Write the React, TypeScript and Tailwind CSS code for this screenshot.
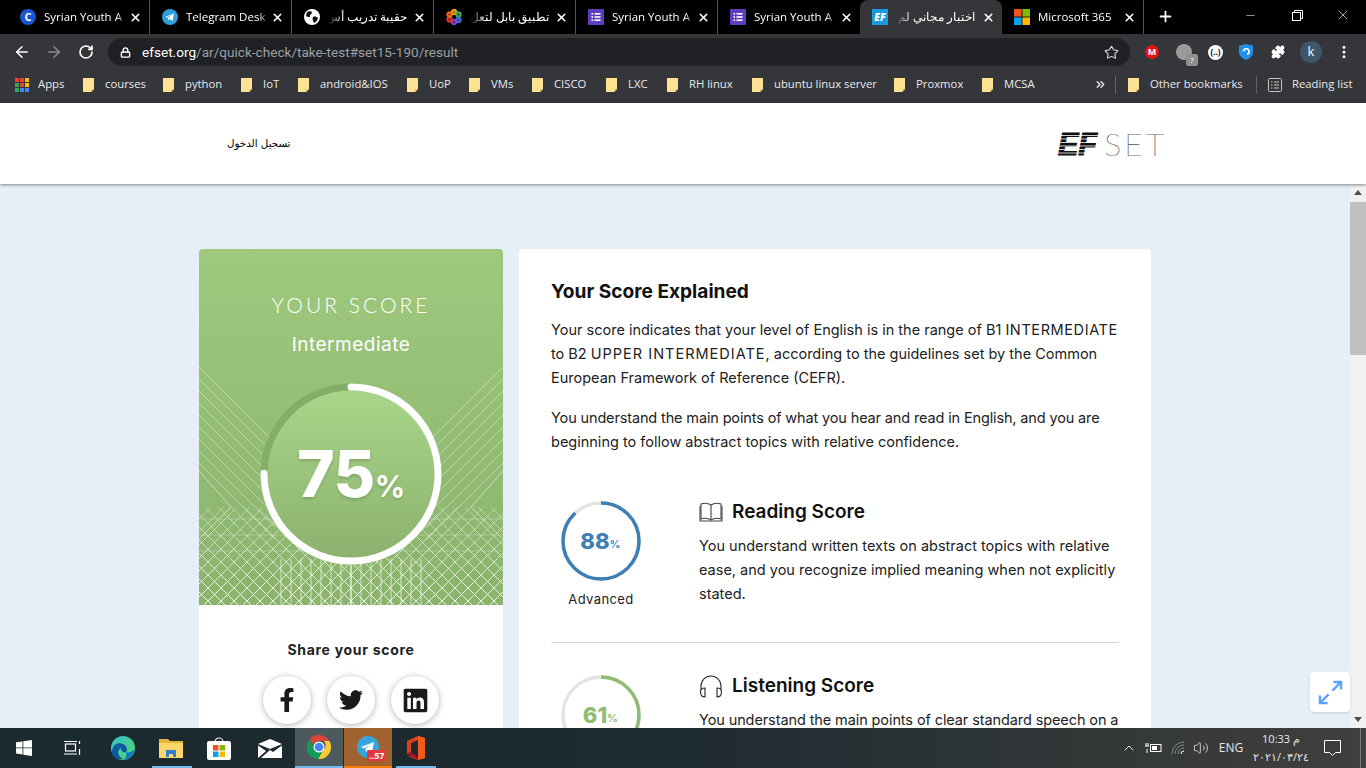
import { ArrowLeft, ArrowRight, RotateCw, Star, Lock, Plus, X, Minus, ChevronUp, MoreVertical, Puzzle, ChevronsRight, Volume2 } from "lucide-react";
import { FaFacebookF, FaTwitter, FaLinkedin } from "react-icons/fa";

const ui = "font-['Open_Sans','Noto_Sans',sans-serif]";
const page = "font-['Inter','Noto_Sans',sans-serif]";

function Favicon({ kind }: { kind: string }) {
  if (kind === "c")
    return (
      <span className="flex h-4 w-4 shrink-0 items-center justify-center rounded-full bg-[#1a56d6] text-[11px] font-bold text-white">C</span>
    );
  if (kind === "tg")
    return (
      <svg className="shrink-0" width="16" height="16" viewBox="0 0 16 16">
        <circle cx="8" cy="8" r="8" fill="#2f9fd8" />
        <path d="M3 8l9-3.6-1.5 7.6-2.7-2-1.4 1.4-.3-2.4 4.2-3.4-5.2 3z" fill="#fff" />
      </svg>
    );
  if (kind === "globe")
    return (
      <svg className="shrink-0" width="16" height="16" viewBox="0 0 16 16">
        <circle cx="8" cy="8" r="8" fill="#fff" />
        <path d="M3 3c2-1 4-1 5 0 0 2-2 2-2 4s-2 1-4 0zM9 8c2-1 4 0 5 1-1 3-2 4-4 5-1-2-2-4-1-6z" fill="#111" />
      </svg>
    );
  if (kind === "babel")
    return (
      <svg className="shrink-0" width="16" height="16" viewBox="0 0 16 16">
        <g fill="#111" strokeWidth="2.4">
          <circle cx="8" cy="3" r="2" stroke="#e8a317" />
          <circle cx="12.5" cy="5.5" r="2" stroke="#3aa655" />
          <circle cx="12.5" cy="11" r="2" stroke="#2b6fd1" />
          <circle cx="8" cy="13" r="2" stroke="#8d3bc9" />
          <circle cx="3.5" cy="10.500" r="2" stroke="#d8342b" />
          <circle cx="3.5" cy="5.500" r="2" stroke="#e86a17" />
        </g>
      </svg>
    );
  if (kind === "forms")
    return (
      <svg className="shrink-0" width="16" height="16" viewBox="0 0 16 16">
        <rect width="16" height="16" rx="1" fill="#5d3fbd" />
        <g fill="#fff">
          <rect x="3.5" y="4" width="1.6" height="1.6" />
          <rect x="6.5" y="4" width="6" height="1.6" />
          <rect x="3.5" y="7.2" width="1.6" height="1.6" />
          <rect x="6.5" y="7.2" width="6" height="1.6" />
          <rect x="3.5" y="10.4" width="1.6" height="1.6" />
          <rect x="6.5" y="10.4" width="6" height="1.6" />
        </g>
      </svg>
    );
  if (kind === "ef")
    return (
      <span className="flex h-4 w-4 shrink-0 items-center justify-center bg-[#1b9be0] text-[10px] font-black italic leading-none text-white">EF</span>
    );
  return (
    <svg className="shrink-0" width="16" height="16" viewBox="0 0 16 16">
      <rect width="7.6" height="7.6" fill="#f25022" />
      <rect x="8.4" width="7.6" height="7.6" fill="#7fba00" />
      <rect y="8.4" width="7.6" height="7.6" fill="#00a4ef" />
      <rect x="8.4" y="8.4" width="7.6" height="7.6" fill="#ffb900" />
    </svg>
  );
}

const tabs = [
  { icon: "c", title: "Syrian Youth A" },
  { icon: "tg", title: "Telegram Desk" },
  { icon: "globe", title: "حقيبة تدريب أس", rtl: true },
  { icon: "babel", title: "تطبيق بابل لتعل", rtl: true },
  { icon: "forms", title: "Syrian Youth A" },
  { icon: "forms", title: "Syrian Youth A" },
  { icon: "ef", title: "اختبار مجاني لم", rtl: true, active: true },
  { icon: "ms", title: "Microsoft 365" },
];

function TabStrip() {
  return (
    <div className={`flex h-[34px] shrink-0 items-end bg-black pl-2 ${ui}`}>
      {tabs.map((t, i) => (
        <div
          key={i}
          className={`flex h-[34px] w-[142px] items-center pl-[12px] pr-[7px] ${
            t.active ? "rounded-t-lg bg-[#35363a]" : tabs[i + 1]?.active ? "" : "border-r border-[#55565a]"
          }`}
        >
          <Favicon kind={t.icon} />
          {t.rtl ? (
            <span dir="rtl" className="ml-2 w-[79px] overflow-hidden whitespace-nowrap text-[11.5px] text-white [mask-image:linear-gradient(to_left,#000_80%,transparent)]">
              {t.title}
            </span>
          ) : (
            <span className="ml-2 w-[84px] overflow-hidden whitespace-nowrap text-[11.5px] text-white [mask-image:linear-gradient(to_right,#000_86%,transparent)]">
              {t.title}
            </span>
          )}
          <X className="ml-auto shrink-0 text-white" size={13} strokeWidth={3} />
        </div>
      ))}
      <Plus className="ml-[13px] mb-[9px] text-white" size={17} strokeWidth={2.5} />
      <div className="ml-auto flex h-[34px] items-start text-white">
        <div className="flex h-[30px] w-[47px] items-center justify-center"><Minus size={13} strokeWidth={1} /></div>
        <div className="flex h-[30px] w-[46px] items-center justify-center">
          <svg width="11" height="11" viewBox="0 0 11 11" fill="none" stroke="#fff" strokeWidth="1">
            <rect x="0.5" y="2.5" width="8" height="8" />
            <path d="M2.5 2.5v-2h8v8h-2" />
          </svg>
        </div>
        <div className="flex h-[30px] w-[46px] items-center justify-center"><X size={16} strokeWidth={1} /></div>
      </div>
    </div>
  );
}

function Toolbar() {
  return (
    <div className={`flex h-[36px] shrink-0 items-center bg-[#35363a] ${ui}`}>
      <ArrowLeft className="ml-[13px] text-white" size={18} strokeWidth={2} />
      <ArrowRight className="ml-[14px] text-[#8b8c8e]" size={18} strokeWidth={2} />
      <RotateCw className="ml-[15px] text-white" size={16} strokeWidth={2.5} />
      <div className="ml-[14px] flex h-[28px] w-[1022px] items-center rounded-full bg-[#202124] pl-[12px] pr-[11px]">
        <Lock className="text-white" size={11} strokeWidth={3} />
        <span className="ml-[11px] font-['Roboto',sans-serif] text-[13.6px] text-[#9aa0a6]">
          <span className="text-white">efset.org</span>/ar/quick-check/take-test#set15-190/result
        </span>
        <Star className="ml-auto text-[#dfe1e5]" size={15} strokeWidth={1.7} />
      </div>
      <span className="ml-[15px] flex h-[14px] w-[14px] items-center justify-center rounded-full bg-[#e2131b] text-[9px] font-bold text-white">M</span>
      <span className="relative ml-[17px] h-[16px] w-[16px] rounded-full bg-[#9b9b9b]">
        <span className="absolute left-[10px] top-[10px] flex h-[12px] w-[12px] items-center justify-center rounded-[2px] bg-[#8f8f8f] text-[8px] text-white">?</span>
      </span>
      <span className="ml-[16px] flex h-[15px] w-[15px] items-center justify-center rounded-full bg-white text-[8px] font-bold text-black">(..)</span>
      <svg className="ml-[16px]" width="14" height="16" viewBox="0 0 14 16">
        <path d="M0 1.5 7 0l7 1.5V8c0 4-3.5 6.8-7 8-3.500-1.200-7-4-7-8z" fill="#1f8fe8" />
        <path d="M4.500 7.500a2.800 2.800 0 1 1 3.500 2.700" fill="none" stroke="#fff" strokeWidth="1.600" />
      </svg>
      <Puzzle className="ml-[18px] fill-white text-white" size={14} strokeWidth={2} />
      <span className="ml-[15px] flex h-[22px] w-[22px] items-center justify-center rounded-full bg-[#3e5667] text-[13px] text-white">k</span>
      <MoreVertical className="ml-[14px] text-white" size={16} strokeWidth={2.5} />
    </div>
  );
}

function Folder() {
  return (
    <svg width="11" height="14" viewBox="0 0 11 14" className="shrink-0">
      <path d="M0 0h11v11l-3 3H0z" fill="#fde293" />
      <path d="M11 11H8v3z" fill="#e8c468" />
    </svg>
  );
}

const bookmarks = [
  { label: "courses", width: "w-[40px]" },
  { label: "python", width: "w-[38px]" },
  { label: "IoT", width: "w-[17px]" },
  { label: "android&IOS", width: "w-[69px]" },
  { label: "UoP", width: "w-[22px]" },
  { label: "VMs", width: "w-[23px]" },
  { label: "CISCO", width: "w-[34px]" },
  { label: "LXC", width: "w-[21px]" },
  { label: "RH linux", width: "w-[45px]" },
  { label: "ubuntu linux server", width: "w-[102px]" },
  { label: "Proxmox", width: "w-[48px]" },
  { label: "MCSA", width: "w-[33px]" },
];

function BookmarksBar() {
  return (
    <div className={`flex h-[33px] shrink-0 items-center bg-[#35363a] pb-[4px] pl-[15px] text-[11.3px] text-[#e8eaed] ${ui}`}>
      <div className="grid h-[14px] w-[14px] grid-cols-3 gap-[1px]">
        {["#ea4335", "#ea4335", "#fbbc04", "#34a853", "#ea4335", "#fbbc04", "#34a853", "#4285f4", "#4285f4"].map((c, i) => (
          <span key={i} style={{ background: c }} />
        ))}
      </div>
      <span className="ml-[9px] w-[27px] whitespace-nowrap">Apps</span>
      {bookmarks.map((b) => (
        <div key={b.label} className="ml-[18px] flex items-center">
          <Folder />
          <span className={`ml-[11px] whitespace-nowrap ${b.width}`}>{b.label}</span>
        </div>
      ))}
      <ChevronsRight className="ml-[57px] text-[#e8eaed]" size={13} strokeWidth={2.5} />
      <span className="ml-[8px] h-[18px] w-px bg-[#5f6368]" />
      <span className="ml-[12px]"><Folder /></span>
      <span className="ml-[11px] w-[92px] whitespace-nowrap">Other bookmarks</span>
      <span className="ml-[14px] h-[18px] w-px bg-[#5f6368]" />
      <svg className="ml-[11px]" width="14" height="14" viewBox="0 0 14 14" fill="none" stroke="#c4c7c5">
        <rect x="0.5" y="0.5" width="13" height="13" rx="1" />
        <path d="M3 4h1.500M6 4h5M3 7h1.500M6 7h5M3 10h1.500M6 10h5" />
      </svg>
      <span className="ml-[10px] whitespace-nowrap">Reading list</span>
    </div>
  );
}

function EfLogo() {
  return (
    <div className="flex items-center">
      <svg width="41" height="26" viewBox="0 0 41 26" className="overflow-visible">
        <text x="0" y="24" fontFamily="Liberation Sans" fontSize="31" fontWeight="900" fontStyle="italic" fill="#111" stroke="#111" strokeWidth="1.2" textLength="39" lengthAdjust="spacingAndGlyphs">EF</text>
        <g stroke="#fff" strokeWidth="0.800">
          <path d="M0 4.500h42M0 8h42M0 11.500h42M0 15h42M0 18.500h42M0 22h42" />
        </g>
      </svg>
      <span className="ml-[5px] font-['Lato',sans-serif] text-[32px] font-thin leading-none tracking-[3px] text-[#222] [-webkit-text-stroke:0.2px_#666]">SET</span>
    </div>
  );
}

// the line work behind the big score circle
function ScorePattern() {
  const upper: string[] = [];
  for (let i = 0; i < 9; i++) {
    const y = 118 + i * 12;
    upper.push(`M0 ${y}L76 ${y + 76}`);
    upper.push(`M304 ${y}L228 ${y + 76}`);
  }
  const lattice: string[] = [];
  for (let k = -98; k < 304; k += 13) {
    lattice.push(`M${k} 258L${k + 98} 356`);
    lattice.push(`M${304 - k} 258L${304 - k - 98} 356`);
  }
  const verticals: string[] = [];
  for (let d = 0; d <= 70; d += 10) {
    verticals.push(`M${152 - d} 310V356`);
    verticals.push(`M${152 + d} 310V356`);
  }
  return (
    <svg className="absolute bottom-0 left-0" width="304" height="356" viewBox="0 0 304 356">
      <defs>
        <linearGradient id="latticeFade" gradientUnits="userSpaceOnUse" x1="0" y1="258" x2="0" y2="356">
          <stop offset="0" stopColor="#fff" stopOpacity="0.3" />
          <stop offset="1" stopColor="#fff" stopOpacity="0.9" />
        </linearGradient>
      </defs>
      <path d={upper.join("")} fill="none" stroke="#fff" strokeOpacity="0.38" />
      <path d="M0 222L32 258L0 290M304 222L272 258L304 290" fill="none" stroke="#fff" strokeOpacity="0.5" />
      <path d={lattice.join("")} fill="none" stroke="url(#latticeFade)" />
      <path d={verticals.join("")} fill="none" stroke="#fff" strokeOpacity="0.65" />
      <path d="M0 270H304M0 286H304M0 302H304" fill="none" stroke="#fff" strokeOpacity="0.25" />
    </svg>
  );
}

function ScoreCircle() {
  const r = 87;
  const c = 2 * Math.PI * r;
  return (
    <div className="relative mx-auto mt-[23px] flex h-[184px] w-[184px] items-center justify-center">
      <svg className="absolute inset-0 -rotate-90" width="184" height="184" viewBox="0 0 184 184">
        <defs>
          <linearGradient id="scoreFill" x1="1" y1="0" x2="0" y2="0">
            <stop offset="0" stopColor="#a9d689" />
            <stop offset="1" stopColor="#8bb26e" />
          </linearGradient>
        </defs>
        <circle cx="92" cy="92" r="84" fill="url(#scoreFill)" />
        <circle cx="92" cy="92" r={r} fill="none" stroke="#84ad68" strokeWidth="7" />
        <circle cx="92" cy="92" r={r} fill="none" stroke="#fff" strokeWidth="7" strokeLinecap="round" strokeDasharray={`${c * 0.75} ${c}`} />
      </svg>
      <div className="relative flex items-baseline text-white [text-shadow:0_2px_3px_rgba(0,0,0,0.15)]">
        <span className="text-[64px] font-extrabold leading-none tracking-[-0.5px]">75</span>
        <span className="text-[30px] font-bold leading-none">%</span>
      </div>
    </div>
  );
}

function ScoreCard() {
  return (
    <div className="w-[304px] shrink-0">
      <div className="relative h-[356px] overflow-hidden rounded-t bg-gradient-to-b from-[#9ec97d] to-[#8ab36c]">
        <ScorePattern />
        <div className="relative text-center text-white">
          <p className="pt-[42px] font-['Lato',sans-serif] text-[21px] font-light leading-[28px] tracking-[3px]">YOUR SCORE</p>
          <p className="mt-[12px] text-[19px] font-normal leading-[28px] tracking-[0.5px]">Intermediate</p>
          <ScoreCircle />
        </div>
      </div>
      <div className="h-[200px] bg-white pt-[35px] text-center">
        <p className="text-[14px] font-bold leading-[20px] tracking-[0.7px] text-[#222]">Share your score</p>
        <div className="mt-[16px] flex justify-center gap-4">
          <span className="flex h-12 w-12 items-center justify-center rounded-full bg-white text-[24px] text-[#1a1a1a] shadow-[0_1px_6px_rgba(0,0,0,0.3)]"><FaFacebookF /></span>
          <span className="flex h-12 w-12 items-center justify-center rounded-full bg-white text-[24px] text-[#1a1a1a] shadow-[0_1px_6px_rgba(0,0,0,0.3)]"><FaTwitter /></span>
          <span className="flex h-12 w-12 items-center justify-center rounded-full bg-white text-[27px] text-[#1a1a1a] shadow-[0_1px_6px_rgba(0,0,0,0.3)]"><FaLinkedin /></span>
        </div>
      </div>
    </div>
  );
}

function SmallRing({ pct, color }: { pct: number; color: string }) {
  const r = 38;
  const c = 2 * Math.PI * r;
  return (
    <svg className="absolute inset-0 -rotate-90" width="80" height="80" viewBox="0 0 80 80">
      <circle cx="40" cy="40" r={r} fill="none" stroke="#e4e4e4" strokeWidth="3.500" />
      <circle cx="40" cy="40" r={r} fill="none" stroke={color} strokeWidth="3.500" strokeDasharray={`${(c * pct) / 100} ${c}`} />
    </svg>
  );
}

function SkillRow({ pct, color, level, title, icon, children }: { pct: number; color: string; level?: string; title: string; icon: React.ReactNode; children: React.ReactNode }) {
  return (
    <div className="flex">
      <div className="w-[100px] shrink-0 pl-[10px]">
        <div className="relative flex h-20 w-20 items-center justify-center pr-px" style={{ color }}>
          <SmallRing pct={pct} color={color} />
          <span className="text-[22px] font-extrabold leading-none">{pct}</span>
          <span className="mt-[6px] text-[11px] font-semibold leading-none">%</span>
        </div>
        {level && <p className="mt-[9px] w-20 text-center text-[13px] leading-[18px] tracking-[0.4px] text-[#222]">{level}</p>}
      </div>
      <div className="ml-[48px]">
        <div className="flex h-[22px] items-center">
          {icon}
          <h3 className="ml-[9px] text-[19px] font-semibold leading-[22px] text-[#111]">{title}</h3>
        </div>
        <p className="mt-[11px] whitespace-nowrap text-[14.5px] leading-[24px] text-[#222]">{children}</p>
      </div>
    </div>
  );
}

function BookIcon() {
  return (
    <svg width="24" height="20" viewBox="0 0 24 20" fill="none" stroke="#444" strokeWidth="1.100">
      <path d="M12 3C9 1 5 1 2 2v15c3-1 7-1 10 1 3-2 7-2 10-1V2c-3-1-7-1-10 1z" />
      <path d="M12 3v15M1 4v15h22V4" />
    </svg>
  );
}

function HeadphoneIcon() {
  return (
    <svg width="24" height="24" viewBox="0 0 24 24" fill="none" stroke="#333" strokeWidth="1.200">
      <path d="M2 16V12a10 10 0 0 1 20 0v4" />
      <path d="M6 14c-3 0-4.500 1-4.500 4s1.500 5 4.500 5zM18 14c3 0 4.500 1 4.500 4s-1.500 5-4.500 5z" />
    </svg>
  );
}

function ExplainCard() {
  return (
    <div className="h-[560px] w-[632px] shrink-0 rounded-t bg-white px-[32px] pt-[28px]">
      <h2 className="text-[19.1px] font-bold leading-[28px] text-[#111]">Your Score Explained</h2>
      <p className="mt-[13px] text-[14.5px] leading-[24px] text-[#222]">
        Your score indicates that your level of English is in the range of B1 <span className="tracking-[0.6px]">INTERMEDIATE</span>
        <br />
        to B2 <span className="tracking-[1px]">UPPER INTERMEDIATE</span>, according to the guidelines set by the Common
        <br />
        European Framework of Reference (CEFR).
      </p>
      <p className="mt-[16px] text-[14.5px] leading-[24px] text-[#222]">
        <span className="tracking-[-0.14px]">You understand the main points of what you hear and read in English, and you are</span>
        <br />
        beginning to follow abstract topics with relative confidence.
      </p>
      <div className="mt-[47px]">
        <SkillRow pct={88} color="#3e7fb5" level="Advanced" title="Reading Score" icon={<BookIcon />}>
          You understand written texts on abstract topics with relative
          <br />
          ease, and you recognize implied meaning when not explicitly
          <br />
          stated.
        </SkillRow>
      </div>
      <div className="mt-[34px] h-px bg-[#d5d5d5]" />
      <div className="mt-[32px]">
        <SkillRow pct={61} color="#8fbb72" title="Listening Score" icon={<HeadphoneIcon />}>
          <span className="tracking-[-0.1px]">You understand the main points of clear standard speech on a</span>
        </SkillRow>
      </div>
    </div>
  );
}

function Scrollbar() {
  return (
    <div className="flex w-4 shrink-0 flex-col items-center bg-[#f1f1f1]">
      <span className="mt-[6px] h-0 w-0 border-x-4 border-b-[5px] border-x-transparent border-b-[#505050]" />
      <span className="mt-[7px] h-[153px] w-full bg-[#c1c1c1]" />
      <span className="mb-[6px] mt-auto h-0 w-0 border-x-4 border-t-[5px] border-x-transparent border-t-[#505050]" />
    </div>
  );
}

function Taskbar() {
  return (
    <div className={`flex h-10 shrink-0 items-stretch bg-gradient-to-r from-[#1b2a2f] via-[#1e2b30] to-[#403f3d] text-white ${ui}`}>
      <div className="flex w-12 items-center justify-center">
        <svg width="16" height="16" viewBox="0 0 16 16" fill="#fff">
          <path d="M0 2.300 6.500 1.400V7.500H0zM7.300 1.300 16 0V7.500H7.300zM0 8.300H6.500V14.500L0 13.600zM7.300 8.300H16V16L7.300 14.700z" />
        </svg>
      </div>
      <div className="flex w-12 items-center justify-center">
        <svg width="17" height="16" viewBox="0 0 17 16" fill="none" stroke="#fff" strokeWidth="1.200">
          <rect x="1.500" y="4" width="10" height="7" />
          <path d="M0 1.500h13M0 14h13M15.500 1v3M15.500 7h.1M15.500 9v6" />
        </svg>
      </div>
      <div className="ml-[3px] flex w-12 items-center justify-center">
        <svg width="24" height="24" viewBox="0 0 24 24">
          <defs>
            <linearGradient id="edgeA" x1="0" y1="0" x2="1" y2="1">
              <stop offset="0" stopColor="#36c3c9" />
              <stop offset="1" stopColor="#52d567" />
            </linearGradient>
          </defs>
          <circle cx="12" cy="12" r="12" fill="url(#edgeA)" />
          <path d="M1 16C1 8 8 6 12 8c4 2 5 6 3 8-3 1-5-1-5-4-4 2-4 8 2 11C6 24 1 21 1 16z" fill="#0c59a4" />
          <path d="M15 16c3 1 6 0 9-3-1 6-6 11-12 11 3-1 4-4 3-8z" fill="#1177c8" />
        </svg>
      </div>
      <div className="relative flex w-12 items-center justify-center">
        <svg width="24" height="20" viewBox="0 0 24 20">
          <path d="M0 1h9l2 2h13v16H0z" fill="#e8b339" />
          <rect y="5" width="24" height="15" fill="#fcd669" />
          <path d="M7 19v-7h10v7h-3v-3h-4v3z" fill="#2f7fd1" />
        </svg>
        <span className="absolute bottom-0 left-[5px] h-[2px] w-[40px] bg-[#76b9ed]" />
      </div>
      <div className="flex w-12 items-center justify-center">
        <svg width="24" height="24" viewBox="0 0 24 24">
          <path d="M8 6a4 4 0 0 1 8 0" fill="none" stroke="#eee" strokeWidth="1.200" />
          <rect y="5" width="24" height="19" rx="2" fill="#fff" />
          <rect x="6" y="9" width="5.500" height="5.500" fill="#f25022" />
          <rect x="12.500" y="9" width="5.500" height="5.500" fill="#7fba00" />
          <rect x="6" y="15.500" width="5.500" height="5.500" fill="#00a4ef" />
          <rect x="12.500" y="15.500" width="5.500" height="5.500" fill="#ffb900" />
        </svg>
      </div>
      <div className="ml-[3px] flex w-12 items-center justify-center">
        <svg width="24" height="19" viewBox="0 0 24 19">
          <path d="M0 5 12 0l12 5-12 5z" fill="#fff" />
          <path d="M0 6.500 8 12 0 19zM24 6.500V19H3l9-8 3 2z" fill="#fff" />
        </svg>
      </div>
      <div className="ml-px flex w-12 items-center justify-center border-b-2 border-[#76b9ed] bg-[#4c5a5d]">
        <svg width="24" height="24" viewBox="0 0 24 24">
          <path d="M12 0a12 12 0 0 1 10.400 6H12a6 6 0 0 0-5.700 4L2.500 4A12 12 0 0 1 12 0z" fill="#db4437" />
          <path d="M22.400 6A12 12 0 0 1 11 24l5.200-9A6 6 0 0 0 17 6z" fill="#fcc934" />
          <path d="M2.500 4A12 12 0 0 0 11 24l5-8.400a6 6 0 0 1-8.800-1.800z" fill="#0f9d58" />
          <circle cx="12" cy="12" r="5.500" fill="#fff" />
          <circle cx="12" cy="12" r="4.300" fill="#4285f4" />
        </svg>
      </div>
      <div className="relative ml-px flex w-12 items-center justify-center border-b-2 border-[#f57c00] bg-[#a0622f]">
        <svg width="22" height="22" viewBox="0 0 22 22">
          <circle cx="11" cy="11" r="11" fill="#36a4de" />
          <path d="M4 11l13-5-2 11-4-3-2 2-.500-3.500 6-4.500-7.500 4.500z" fill="#fff" />
        </svg>
        <span className="absolute bottom-[5px] left-[23px] rounded-[2px] bg-[#e8343c] px-[2px] text-[9px] font-bold leading-[11px] text-white">..57</span>
      </div>
      <div className="relative flex w-12 items-center justify-center">
        <svg width="18" height="24" viewBox="0 0 18 24">
          <path d="M0 5 11 0l7 2v20l-7 2-11-4 11 1.500V4L4 7v9l-4 2z" fill="#e0401c" />
          <path d="M11 0l7 2v20l-7 2z" fill="#f25a1d" />
          <path d="M0 18l4-2 7 5v3z" fill="#a8132a" />
        </svg>
        <span className="absolute bottom-0 left-[4px] h-[2px] w-[40px] bg-[#76b9ed]" />
      </div>

      <div className="ml-auto flex items-center pr-[5px] text-[#e8e8e8]">
        <ChevronUp size={16} strokeWidth={1.5} />
        <svg className="ml-[8px]" width="17" height="12" viewBox="0 0 17 12" fill="none" stroke="#fff" strokeWidth="1">
          <rect x="5.500" y="2.500" width="10.500" height="7" />
          <rect x="7" y="4" width="5" height="4" fill="#fff" stroke="none" />
          <path d="M0 4h4M1 1v3M3 1v3M2 7v4" />
        </svg>
        <svg className="ml-[9px]" width="14" height="14" viewBox="0 0 14 14" fill="none" stroke="#888" strokeWidth="1">
          <path d="M1 13a12 12 0 0 1 12-12M4 13a9 9 0 0 1 9-9M7 13a6 6 0 0 1 6-6" />
          <path d="M10 13a3 3 0 0 1 3-3" stroke="#fff" />
        </svg>
        <Volume2 className="ml-[8px]" size={16} strokeWidth={1.2} />
        <span className="ml-[7px] w-[30px] text-center text-[12px]">ENG</span>
        <div className="ml-[4px] flex w-[62px] flex-col items-center text-[11px] leading-[18px]">
          <span>10:33 م</span>
          <span>٢٠٢١/٠٣/٢٤</span>
        </div>
        <svg className="ml-[12px]" width="17" height="16" viewBox="0 0 17 16" fill="none" stroke="#fff" strokeWidth="1">
          <path d="M.5.5h16v12h-5l-3 3-3-3h-5z" />
        </svg>
        <span className="ml-[19px] h-full w-px bg-[#7a7a7a]" />
      </div>
    </div>
  );
}

export default function App() {
  return (
    <div className="flex h-screen flex-col overflow-hidden bg-[#e6eff7]">
      <TabStrip />
      <Toolbar />
      <BookmarksBar />
      <header className={`relative z-10 flex h-[81px] shrink-0 items-center justify-between bg-white pl-[227px] pr-[199px] shadow-[0_1px_3px_rgba(0,0,0,0.45)] ${page}`}>
        <span dir="rtl" className="font-['DejaVu_Sans',sans-serif] text-[10.3px] text-black">تسجيل الدخول</span>
        <EfLogo />
      </header>
      <div className="relative flex min-h-0 flex-1">
        <main className={`flex flex-1 items-start gap-4 overflow-hidden pl-[199px] pt-[65px] ${page}`}>
          <ScoreCard />
          <ExplainCard />
        </main>
        <Scrollbar />
        <button className="absolute bottom-[16px] right-[16px] flex h-10 w-10 items-center justify-center rounded bg-white shadow-sm">
          <svg width="25" height="25" viewBox="0 0 26 26" fill="none" stroke="#5aa5ff" strokeWidth="2.500">
            <path d="M15 11 24 2M16 2h8v8M11 15l-9 9M2 16v8h8" />
          </svg>
        </button>
      </div>
      <Taskbar />
    </div>
  );
}
